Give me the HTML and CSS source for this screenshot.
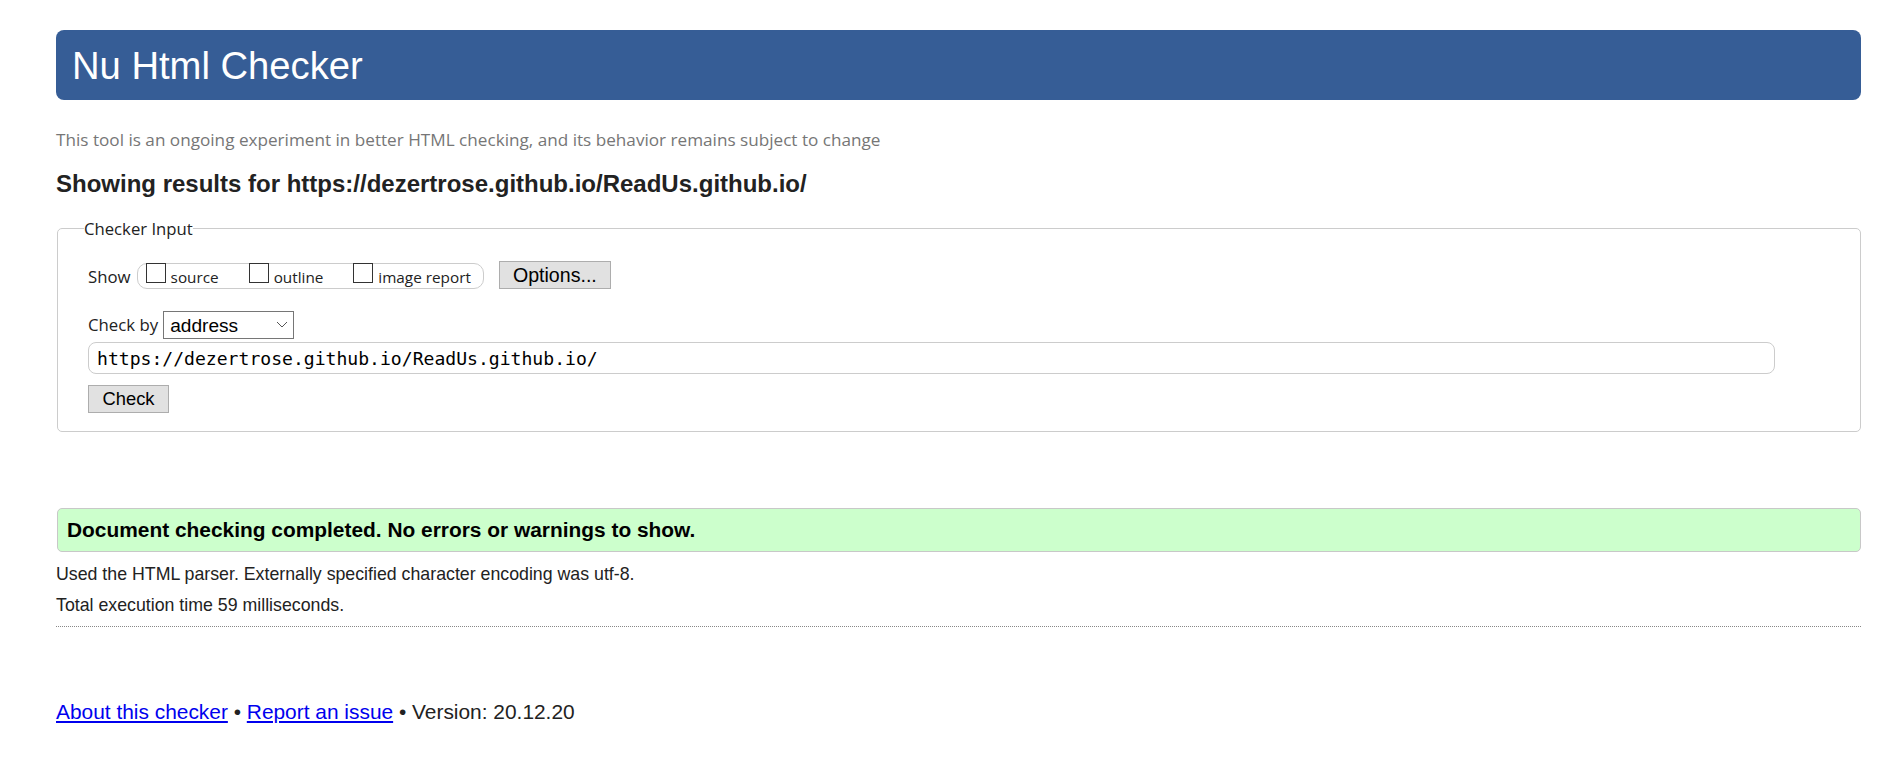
FILE: index.html
```html
<!DOCTYPE html>
<html lang="en">
<head>
<meta charset="utf-8">
<title>Nu Html Checker</title>
<link rel="stylesheet" href="styles.css">
</head>
<body>
<header class="banner"><h1 class="title">Nu Html Checker</h1></header>
<p class="intro">This tool is an ongoing experiment in better HTML checking, and its behavior remains subject to change</p>
<h2 class="results-for">Showing results for https://dezertrose.github.io/ReadUs.github.io/</h2>
<form class="checker">
  <fieldset class="checker-input">
    <legend class="legend">Checker Input</legend>
    <div class="row show-row">
      <span class="field-label">Show</span>
      <span class="show-group">
        <label class="opt"><input class="box" type="checkbox">source</label>
        <label class="opt"><input class="box" type="checkbox">outline</label>
        <label class="opt last"><input class="box" type="checkbox">image report</label>
      </span>
      <button type="button" class="btn btn-options">Options...</button>
    </div>
    <div class="row checkby-row">
      <label class="field-label">Check by</label>
      <span class="select-wrap">
        <select class="select"><option>address</option></select>
        <svg class="chevron" width="12" height="7" viewBox="0 0 12 7"><polyline points="1,1 6,6 11,1" fill="none" stroke="#555" stroke-width="1"/></svg>
      </span>
    </div>
    <input class="url" type="text" value="https://dezertrose.github.io/ReadUs.github.io/">
    <div class="row submit-row"><button type="button" class="btn btn-check">Check</button></div>
  </fieldset>
</form>
<div class="success">Document checking completed. No errors or warnings to show.</div>
<p class="details first">Used the HTML parser. Externally specified character encoding was utf-8.</p>
<p class="details second">Total execution time 59 milliseconds.</p>
<hr class="divider">
<p class="footer"><a href="#">About this checker</a> • <a href="#">Report an issue</a> • Version: 20.12.20</p>
</body>
</html>
```
FILE: styles.css
```css
html, body {
  margin: 0;
  background: #fff;
}
body {
  padding: 30px 33px 0 56px;
  font-family: "Liberation Sans", Arial, sans-serif;
  font-size: 17.75px;
  color: #222;
}
.banner {
  height: 70px;
  box-sizing: border-box;
  padding: 1px 0 0 16px;
  background: #365d96;
  border-radius: 8px;
}
.title {
  margin: 0;
  font-weight: normal;
  font-size: 38.2px;
  line-height: 70px;
  color: #fff;
}
.intro {
  margin: 28px 0 0;
  font-family: "Open Sans", sans-serif;
  font-size: 17.15px;
  line-height: 24px;
  color: #767676;
}
.results-for {
  margin: 18px 0 0;
  font-size: 24px;
  line-height: 28px;
  font-weight: bold;
  color: #222;
}
.checker { margin: 0; }
.checker-input {
  margin: 19px 0 0 1px;
  padding: 21px 30px 18px 30px;
  border: 1px solid #cccccc;
  border-radius: 5px;
  min-width: 0;
}
.legend {
  margin-left: -4px;
  padding: 0;
  font-family: "Open Sans", sans-serif;
  font-size: 16.7px;
  line-height: 23px;
  color: #222;
}
.row {
  display: flex;
}
.show-row {
  height: 28px;
  align-items: flex-end;
}
.field-label {
  font-family: "Open Sans", sans-serif;
  font-size: 16.8px;
  line-height: 24px;
  color: #222;
}
.show-group {
  display: block;
  box-sizing: border-box;
  height: 26px;
  margin-left: 6px;
  padding: 1px 12px 0 8px;
  border: 1px solid #cccccc;
  border-radius: 10px;
  font-family: "Open Sans", sans-serif;
  font-size: 15.3px;
  line-height: 24px;
  white-space: nowrap;
  color: #222;
}
.opt { margin-right: 26px; }
.opt.last { margin-right: 0; }
.box {
  -webkit-appearance: none;
  appearance: none;
  display: inline-block;
  box-sizing: border-box;
  width: 20px;
  height: 20px;
  margin: -2px 5px 0 0;
  vertical-align: baseline;
  border: 1px solid #333;
  background: #fff;
  border-radius: 0;
}
.btn {
  box-sizing: border-box;
  height: 28px;
  padding: 0;
  border: 1px solid #adadad;
  border-radius: 0;
  background: #e1e1e1;
  color: #000;
  font-family: "Liberation Sans", Arial, sans-serif;
  font-size: 19.6px;
  line-height: 26px;
}
.btn-options {
  width: 112px;
  margin-left: 15px;
}
.checkby-row {
  margin-top: 22px;
  height: 28px;
  align-items: center;
}
.select-wrap {
  position: relative;
  margin-left: 5px;
}
.select {
  -webkit-appearance: none;
  appearance: none;
  display: block;
  box-sizing: border-box;
  width: 131px;
  height: 28px;
  margin: 0;
  padding: 0 0 0 6px;
  border: 1px solid #767676;
  border-radius: 0;
  background: #fff;
  color: #000;
  font-family: "Liberation Sans", Arial, sans-serif;
  font-size: 19.1px;
}
.chevron {
  position: absolute;
  left: 113px;
  top: 10px;
}
.url {
  display: block;
  box-sizing: border-box;
  width: 1687px;
  height: 32px;
  margin: 3px 0 0;
  padding: 0 8px;
  border: 1px solid #cccccc;
  border-radius: 8px;
  font-family: "DejaVu Sans Mono", monospace;
  font-size: 18.09px;
  color: #000;
  outline: none;
}
.submit-row { margin-top: 11px; }
.btn-check {
  width: 81px;
  font-size: 18.35px;
}
.success {
  margin: 76px 0 0 1px;
  padding: 9px 9px;
  border: 1px solid #c8c8c8;
  border-radius: 5px;
  background: #ccffcc;
  font-weight: bold;
  font-size: 20.9px;
  line-height: 24px;
  color: #000;
}
.details {
  margin: 0;
  font-size: 17.75px;
  line-height: 24px;
  color: #222;
}
.details.first { margin-top: 10px; }
.details.second { margin-top: 7px; }
.divider {
  height: 0;
  margin: 9px 0 0;
  border: 0;
  border-top: 1px dotted #888;
}
.footer {
  margin: 73px 0 0;
  font-size: 20.9px;
  line-height: 24px;
  color: #222;
}
.footer a { color: #0000ee; }
```
